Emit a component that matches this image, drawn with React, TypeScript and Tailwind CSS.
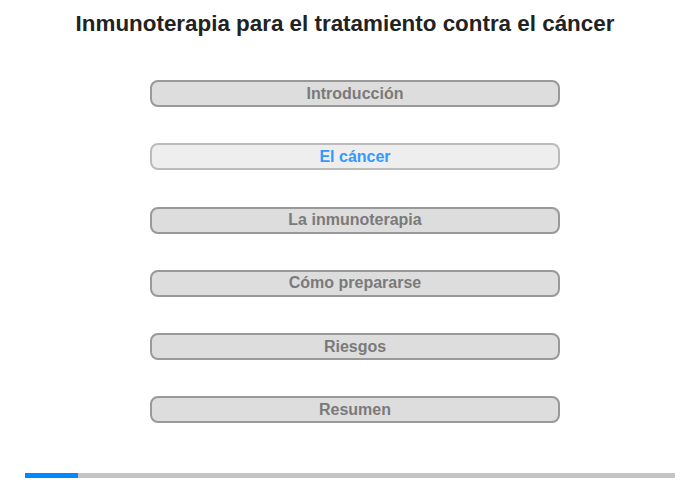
import React from "react";

const items = ["Introducción", "El cáncer", "La inmunoterapia", "Cómo prepararse", "Riesgos", "Resumen"];

export default function App() {
  return (
    <div className="w-[700px] h-[480px] bg-white flex flex-col" style={{ fontFamily: '"Liberation Sans", Arial, sans-serif' }}>
      <h1 className="pt-[11px] pr-[10px] h-[80px] text-center text-[22.4px] leading-[26px] font-bold text-[#222222]">
        Inmunoterapia para el tratamiento contra el cáncer
      </h1>
      <div className="flex flex-col pl-[150px] gap-[36.25px]">
        {items.map((t, i) => {
          const active = i === 1;
          return (
            <div
              key={t}
              className={
                active
                  ? "w-[410px] h-[27px] rounded-[8px] border-2 border-[#bbbbbb] bg-[#eeeeee] text-[#3399ff] flex items-center justify-center text-[16px] font-bold"
                  : "w-[410px] h-[27px] rounded-[8px] border-2 border-[#999999] bg-[#dddddd] text-[#7a7a7a] flex items-center justify-center text-[16px] font-bold"
              }
            >
              {t}
            </div>
          );
        })}
      </div>
      <div className="mt-[50px] mx-[25px] h-[5px] bg-[#c4c4c4] flex">
        <div className="w-[53px] h-full bg-[#0088ff]" />
      </div>
    </div>
  );
}
